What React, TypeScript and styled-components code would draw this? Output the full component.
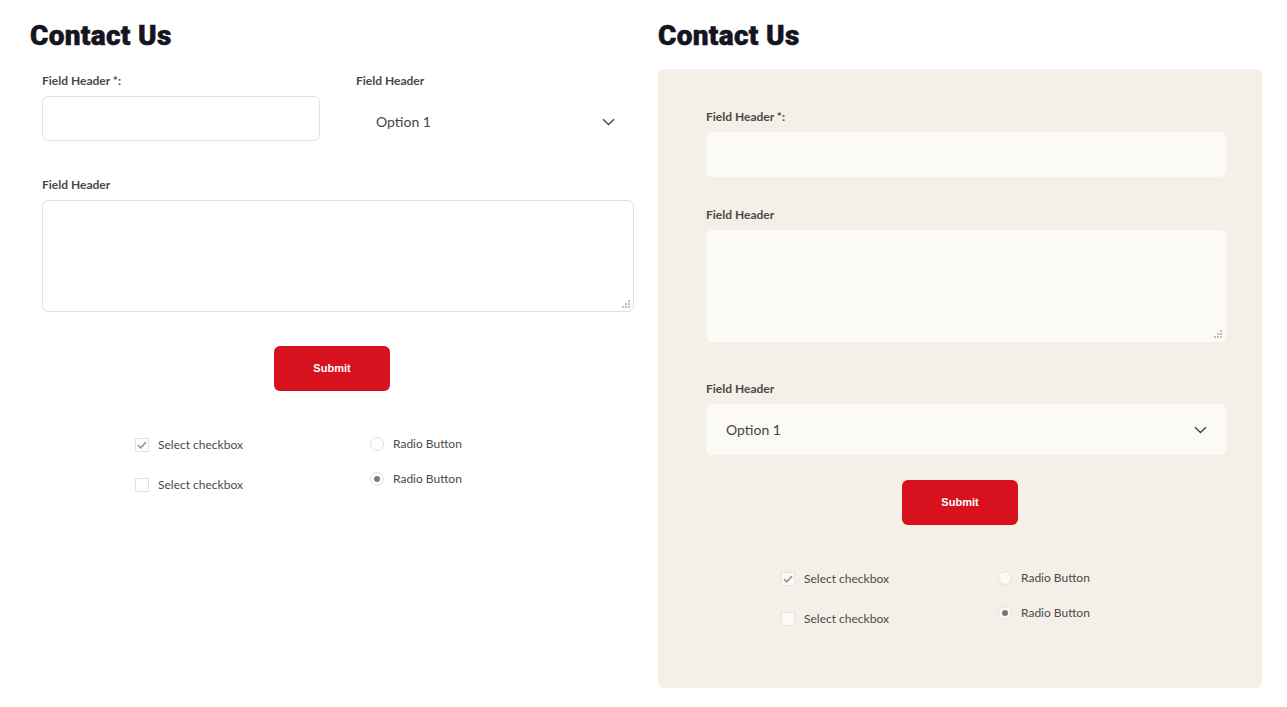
import styled, { createGlobalStyle } from "styled-components";

const GlobalStyle = createGlobalStyle`
  body {
    margin: 0;
    background: #ffffff;
    font-family: Lato, "Noto Sans", sans-serif;
    color: #4a4a4a;
  }
  * { box-sizing: border-box; }
`;

const Page = styled.main`
  display: grid;
  grid-template-columns: 604px 604px;
  column-gap: 24px;
  padding: 17px 25px 0 30px;
`;

const Column = styled.section`
  display: flex;
  flex-direction: column;
`;

const Heading = styled.h1`
  margin: 0 0 14px;
  font-family: Roboto, "Liberation Sans", sans-serif;
  font-weight: 900;
  font-size: 28px;
  line-height: 38px;
  letter-spacing: 0.3px;
  color: #16141f;
  -webkit-text-stroke: 0.5px #16141f;
`;

const Card = styled.form<{ $filled?: boolean }>`
  display: flex;
  flex-direction: column;
  padding: ${(p) => (p.$filled ? "40px 0 61px" : "4px 0 0")};
  background: ${(p) => (p.$filled ? "#f4f0e8" : "transparent")};
  border-radius: 6px;
`;

const Fields = styled.div<{ $left: number; $right: number }>`
  display: flex;
  flex-direction: column;
  margin: 0 ${(p) => p.$right}px 0 ${(p) => p.$left}px;
`;

const FieldGrid = styled.div`
  display: grid;
  grid-template-columns: 278px 278px;
  column-gap: 36px;
  align-items: start;
`;

const Field = styled.div<{ $top?: number }>`
  display: flex;
  flex-direction: column;
  margin-top: ${(p) => p.$top ?? 0}px;
`;

const Label = styled.label`
  font-size: 12px;
  line-height: 16px;
  font-weight: 700;
  color: #4a4a4a;
  margin-bottom: 7px;
`;

const TextInput = styled.input<{ $filled?: boolean }>`
  height: 45px;
  width: 100%;
  border-radius: 6px;
  border: 1px solid ${(p) => (p.$filled ? "#fbfaf7" : "#e0e0e0")};
  background: ${(p) => (p.$filled ? "#fbfaf7" : "#ffffff")};
  padding: 0 16px;
  font: inherit;
  outline: none;
`;

const AreaWrap = styled.div`
  position: relative;
  display: flex;
`;

const TextArea = styled.textarea<{ $filled?: boolean }>`
  height: 112px;
  width: 100%;
  resize: none;
  border-radius: 6px;
  border: 1px solid ${(p) => (p.$filled ? "#fbfaf7" : "#e0e0e0")};
  background: ${(p) => (p.$filled ? "#fbfaf7" : "#ffffff")};
  padding: 12px 16px;
  font: inherit;
  outline: none;
`;

const Grip = styled.svg`
  position: absolute;
  right: 4px;
  bottom: 4px;
`;

const SelectBox = styled.div<{ $filled?: boolean }>`
  height: 51px;
  display: flex;
  align-items: center;
  justify-content: space-between;
  padding: 0 19px 0 20px;
  border-radius: 6px;
  background: ${(p) => (p.$filled ? "#fbfaf7" : "#ffffff")};
  font-size: 14px;
  color: #444444;
  cursor: pointer;
`;

const ButtonRow = styled.div<{ $top: number }>`
  display: flex;
  justify-content: center;
  margin-top: ${(p) => p.$top}px;
`;

const SubmitButton = styled.button`
  width: 116px;
  height: 45px;
  border: none;
  border-radius: 6px;
  background: #d7111e;
  color: #ffffff;
  font-family: "Liberation Sans", Arial, sans-serif;
  font-weight: 700;
  font-size: 11px;
  padding: 0 0 1px;
  cursor: pointer;
`;

const ChoiceRow = styled.div<{ $offset: number; $top: number }>`
  display: flex;
  margin-top: ${(p) => p.$top}px;
  padding-left: ${(p) => p.$offset}px;
`;

const ChoiceGroup = styled.div<{ $width?: number; $gap: number }>`
  display: flex;
  flex-direction: column;
  gap: ${(p) => p.$gap}px;
  width: ${(p) => (p.$width ? `${p.$width}px` : "auto")};
`;

const Choice = styled.label<{ $lift?: number }>`
  display: flex;
  align-items: center;
  gap: 9px;
  font-size: 12px;
  line-height: 16px;
  color: #4a4a4a;
  margin-top: ${(p) => -(p.$lift ?? 0)}px;
`;

const Box = styled.span<{ $filled?: boolean; $round?: boolean }>`
  width: 14px;
  height: 14px;
  display: flex;
  align-items: center;
  justify-content: center;
  border: 1px solid ${(p) => (p.$filled ? "#e6e2da" : "#e0e0e0")};
  border-radius: ${(p) => (p.$round ? "50%" : "1px")};
  background: ${(p) => (p.$filled ? "#fbfaf7" : "#ffffff")};
`;

const Dot = styled.span`
  width: 6px;
  height: 6px;
  border-radius: 50%;
  background: #7a7a7a;
`;

const Chevron = () => (
  <svg width="13" height="8" viewBox="0 0 13 8" fill="none">
    <path d="M1 1.2 6.5 6.5 12 1.2" stroke="#444" strokeWidth="1.4" />
  </svg>
);

const Check = () => (
  <svg width="10" height="8" viewBox="0 0 10 8" fill="none">
    <path d="M1 4.2 3.7 6.8 9 1.2" stroke="#9a9a9a" strokeWidth="1.8" />
  </svg>
);

const ResizeGrip = () => (
  <Grip width="8" height="8" viewBox="0 0 8 8">
    {[
      [6, 0],
      [6, 3],
      [6, 6],
      [3, 3],
      [3, 6],
      [0, 6],
    ].map(([x, y]) => (
      <rect key={`${x}-${y}`} x={x} y={y} width="2" height="2" fill="#bdbdbd" />
    ))}
  </Grip>
);

interface ChoicesProps {
  filled?: boolean;
  offset: number;
  width: number;
  top: number;
}

const Choices = ({ filled, offset, width, top }: ChoicesProps) => (
  <ChoiceRow $offset={offset} $top={top}>
    <ChoiceGroup $width={width} $gap={24}>
      <Choice>
        <Box $filled={filled}>
          <Check />
        </Box>
        Select checkbox
      </Choice>
      <Choice>
        <Box $filled={filled} />
        Select checkbox
      </Choice>
    </ChoiceGroup>
    <ChoiceGroup $gap={19}>
      <Choice $lift={1}>
        <Box $filled={filled} $round />
        Radio Button
      </Choice>
      <Choice>
        <Box $filled={filled} $round>
          <Dot />
        </Box>
        Radio Button
      </Choice>
    </ChoiceGroup>
  </ChoiceRow>
);

const App = () => {
  return (
    <>
      <GlobalStyle />
      <Page>
        <Column>
          <Heading>Contact Us</Heading>
          <Card onSubmit={(e) => e.preventDefault()}>
            <Fields $left={12} $right={0}>
              <FieldGrid>
                <Field>
                  <Label>Field Header *:</Label>
                  <TextInput />
                </Field>
                <Field>
                  <Label>Field Header</Label>
                  <SelectBox>
                    Option 1
                    <Chevron />
                  </SelectBox>
                </Field>
              </FieldGrid>
              <Field $top={30}>
                <Label>Field Header</Label>
                <AreaWrap>
                  <TextArea />
                  <ResizeGrip />
                </AreaWrap>
              </Field>
            </Fields>
            <ButtonRow $top={34}>
              <SubmitButton type="submit">Submit</SubmitButton>
            </ButtonRow>
            <Choices offset={105} width={235} top={46} />
          </Card>
        </Column>

        <Column>
          <Heading>Contact Us</Heading>
          <Card $filled onSubmit={(e) => e.preventDefault()}>
            <Fields $left={48} $right={36}>
              <Field>
                <Label>Field Header *:</Label>
                <TextInput $filled />
              </Field>
              <Field $top={30}>
                <Label>Field Header</Label>
                <AreaWrap>
                  <TextArea $filled />
                  <ResizeGrip />
                </AreaWrap>
              </Field>
              <Field $top={39}>
                <Label>Field Header</Label>
                <SelectBox $filled>
                  Option 1
                  <Chevron />
                </SelectBox>
              </Field>
            </Fields>
            <ButtonRow $top={25}>
              <SubmitButton type="submit">Submit</SubmitButton>
            </ButtonRow>
            <Choices filled offset={123} width={217} top={46} />
          </Card>
        </Column>
      </Page>
    </>
  );
};

export default App;
